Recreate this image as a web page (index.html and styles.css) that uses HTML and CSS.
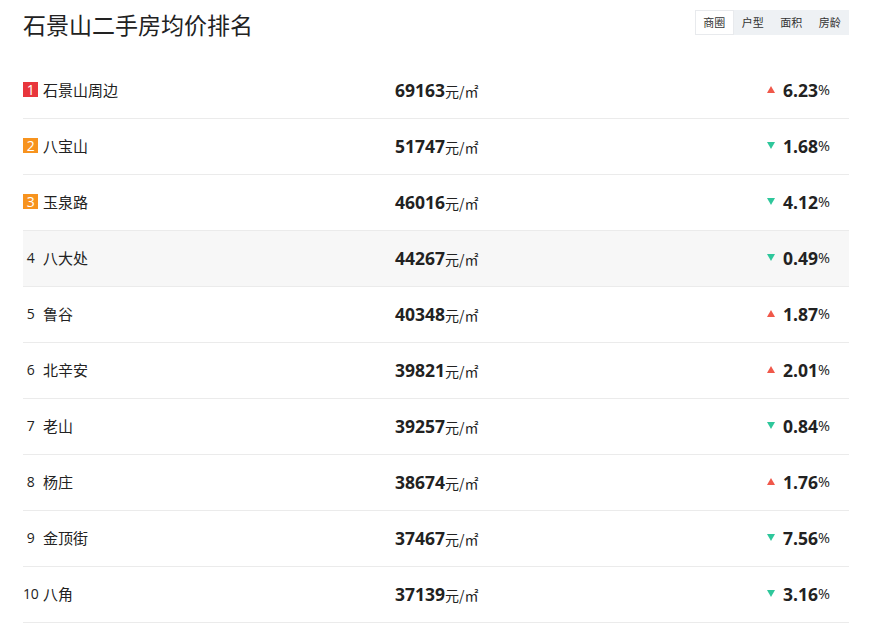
FILE: index.html
```html
<!DOCTYPE html>
<html lang="zh">
<head>
<meta charset="utf-8">
<link rel="stylesheet" href="styles.css">
</head>
<body>
<div class="page">
  <div class="head">
    <h1 class="title">石景山二手房均价排名</h1>
    <div class="tabs">
      <span class="tab active">商圈</span>
      <span class="tab">户型</span>
      <span class="tab">面积</span>
      <span class="tab">房龄</span>
    </div>
  </div>
  <ul class="list">
    <li class="row"><div class="name"><span class="rank top1">1</span>石景山周边</div><div class="price"><b>69163</b>元/㎡</div><div class="chg"><span class="tri up"></span><b>6.23</b>%</div></li>
    <li class="row"><div class="name"><span class="rank top2">2</span>八宝山</div><div class="price"><b>51747</b>元/㎡</div><div class="chg"><span class="tri down"></span><b>1.68</b>%</div></li>
    <li class="row"><div class="name"><span class="rank top2">3</span>玉泉路</div><div class="price"><b>46016</b>元/㎡</div><div class="chg"><span class="tri down"></span><b>4.12</b>%</div></li>
    <li class="row hl"><div class="name"><span class="rank">4</span>八大处</div><div class="price"><b>44267</b>元/㎡</div><div class="chg"><span class="tri down"></span><b>0.49</b>%</div></li>
    <li class="row"><div class="name"><span class="rank">5</span>鲁谷</div><div class="price"><b>40348</b>元/㎡</div><div class="chg"><span class="tri up"></span><b>1.87</b>%</div></li>
    <li class="row"><div class="name"><span class="rank">6</span>北辛安</div><div class="price"><b>39821</b>元/㎡</div><div class="chg"><span class="tri up"></span><b>2.01</b>%</div></li>
    <li class="row"><div class="name"><span class="rank">7</span>老山</div><div class="price"><b>39257</b>元/㎡</div><div class="chg"><span class="tri down"></span><b>0.84</b>%</div></li>
    <li class="row"><div class="name"><span class="rank">8</span>杨庄</div><div class="price"><b>38674</b>元/㎡</div><div class="chg"><span class="tri up"></span><b>1.76</b>%</div></li>
    <li class="row"><div class="name"><span class="rank">9</span>金顶街</div><div class="price"><b>37467</b>元/㎡</div><div class="chg"><span class="tri down"></span><b>7.56</b>%</div></li>
    <li class="row"><div class="name"><span class="rank">10</span>八角</div><div class="price"><b>37139</b>元/㎡</div><div class="chg"><span class="tri down"></span><b>3.16</b>%</div></li>
  </ul>
</div>
</body>
</html>
```
FILE: styles.css
```css
* { box-sizing: border-box; }
body {
  margin: 0;
  background: #fff;
  color: #222;
  font-family: "Noto Sans CJK SC", "Open Sans", sans-serif;
}
.page {
  width: 849px;
  padding: 9px 0 0 23px;
}
.head {
  display: flex;
  justify-content: space-between;
  align-items: flex-start;
  height: 54px;
}
.title {
  margin: 0;
  font-size: 23px;
  font-weight: 400;
  line-height: 30px;
  color: #222;
}
.tabs {
  display: flex;
  background: #eef1f4;
  height: 25px;
  margin-top: 1px;
}
.tab {
  width: 38.5px;
  text-align: center;
  font-size: 11px;
  line-height: 25px;
  color: #333;
}
.tab.active {
  background: #fff;
  border: 1px solid #e8eaed;
  line-height: 23px;
}
.list {
  list-style: none;
  margin: 0;
  padding: 0;
}
.row {
  display: grid;
  grid-template-columns: 372px 1fr auto;
  align-items: center;
  height: 56px;
  padding-bottom: 2px;
  border-bottom: 1px solid #ebebeb;
}
.row.hl { background: #f7f7f7; }
.name {
  display: flex;
  align-items: center;
  font-size: 15px;
}
.rank {
  width: 15px;
  height: 15px;
  margin-right: 5px;
  font-family: "Open Sans", sans-serif;
  font-size: 14px;
  line-height: 15px;
  text-align: center;
  color: #222;
  white-space: nowrap;
  letter-spacing: -0.3px;
}
.rank.top1 { background: #e8363c; color: #fff; }
.rank.top2 { background: #f7931e; color: #fff; }
.price {
  font-size: 14px;
  color: #222;
}
.price b, .chg b {
  font-family: "Open Sans", sans-serif;
  font-weight: 700;
  font-size: 17.5px;
}
.chg {
  display: flex;
  align-items: center;
  padding-right: 19px;
  font-family: "Open Sans", sans-serif;
  font-size: 14.5px;
}
.tri {
  width: 0;
  height: 0;
  margin-right: 8px;
  border-left: 4px solid transparent;
  border-right: 4px solid transparent;
}
.tri.up { border-bottom: 7px solid #f0584a; }
.tri.down { border-top: 7px solid #2ec79b; }
```
